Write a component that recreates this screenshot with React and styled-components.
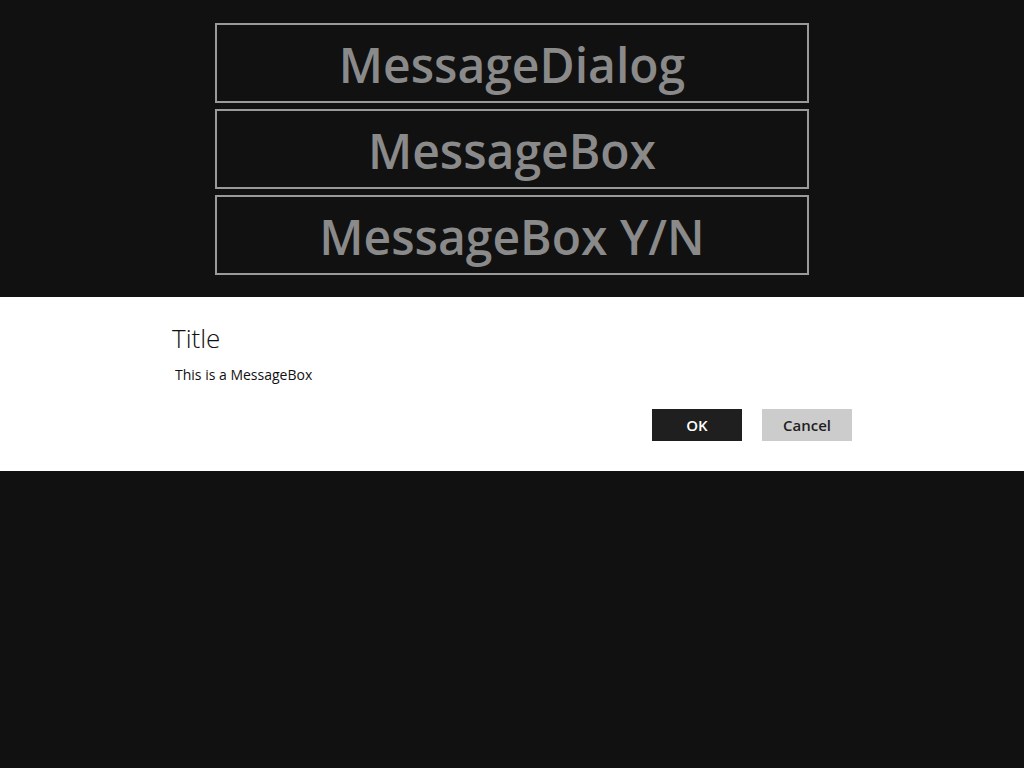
import React from "react";
import styled, { createGlobalStyle } from "styled-components";

const Global = createGlobalStyle`
  html, body {
    margin: 0;
    padding: 0;
    background: #111111;
    height: 100%;
  }
  body {
    font-family: "Open Sans", "Noto Sans", sans-serif;
  }
`;

const Page = styled.div`
  min-height: 768px;
  display: flex;
  flex-direction: column;
  align-items: center;
  padding-top: 23px;
  gap: 6px;
  box-sizing: border-box;
`;

const BigButton = styled.button`
  width: 594px;
  height: 80px;
  box-sizing: border-box;
  border: 2px solid #9a9a9a;
  background: transparent;
  color: #8a8a8a;
  font-family: "Open Sans", "Noto Sans", sans-serif;
  font-weight: 600;
  font-size: 48px;
  line-height: 1;
  padding: 3px 0 0;
  display: flex;
  align-items: center;
  justify-content: center;
  cursor: pointer;
`;

const Overlay = styled.div`
  position: fixed;
  inset: 0;
  display: flex;
  align-items: center;
`;

const Dialog = styled.div`
  width: 100%;
  height: 174px;
  background: #ffffff;
  display: flex;
  justify-content: center;
`;

const Content = styled.div`
  width: 680px;
  padding-top: 23px;
  display: flex;
  flex-direction: column;
`;

const Title = styled.div`
  font-size: 26px;
  font-weight: 300;
  color: #111;
  line-height: 36px;
`;

const Message = styled.div`
  font-size: 14px;
  color: #111;
  margin: 9px 0 0 3px;
  line-height: 20px;
`;

const Actions = styled.div`
  display: flex;
  justify-content: flex-end;
  gap: 20px;
  margin-top: 24px;
`;

const ActionButton = styled.button`
  width: 90px;
  height: 32px;
  border: none;
  padding: 0;
  font-family: "Open Sans", "Noto Sans", sans-serif;
  font-weight: 600;
  font-size: 15px;
  background: ${(p) => (p.$primary ? "#1f1f1f" : "#cccccc")};
  color: ${(p) => (p.$primary ? "#ffffff" : "#1f1f1f")};
  cursor: pointer;
`;

export default function App() {
  return (
    <>
      <Global />
      <Page>
        <BigButton>MessageDialog</BigButton>
        <BigButton>MessageBox</BigButton>
        <BigButton>MessageBox Y/N</BigButton>
      </Page>
      <Overlay>
        <Dialog>
          <Content>
            <Title>Title</Title>
            <Message>This is a MessageBox</Message>
            <Actions>
              <ActionButton $primary>OK</ActionButton>
              <ActionButton>Cancel</ActionButton>
            </Actions>
          </Content>
        </Dialog>
      </Overlay>
    </>
  );
}
